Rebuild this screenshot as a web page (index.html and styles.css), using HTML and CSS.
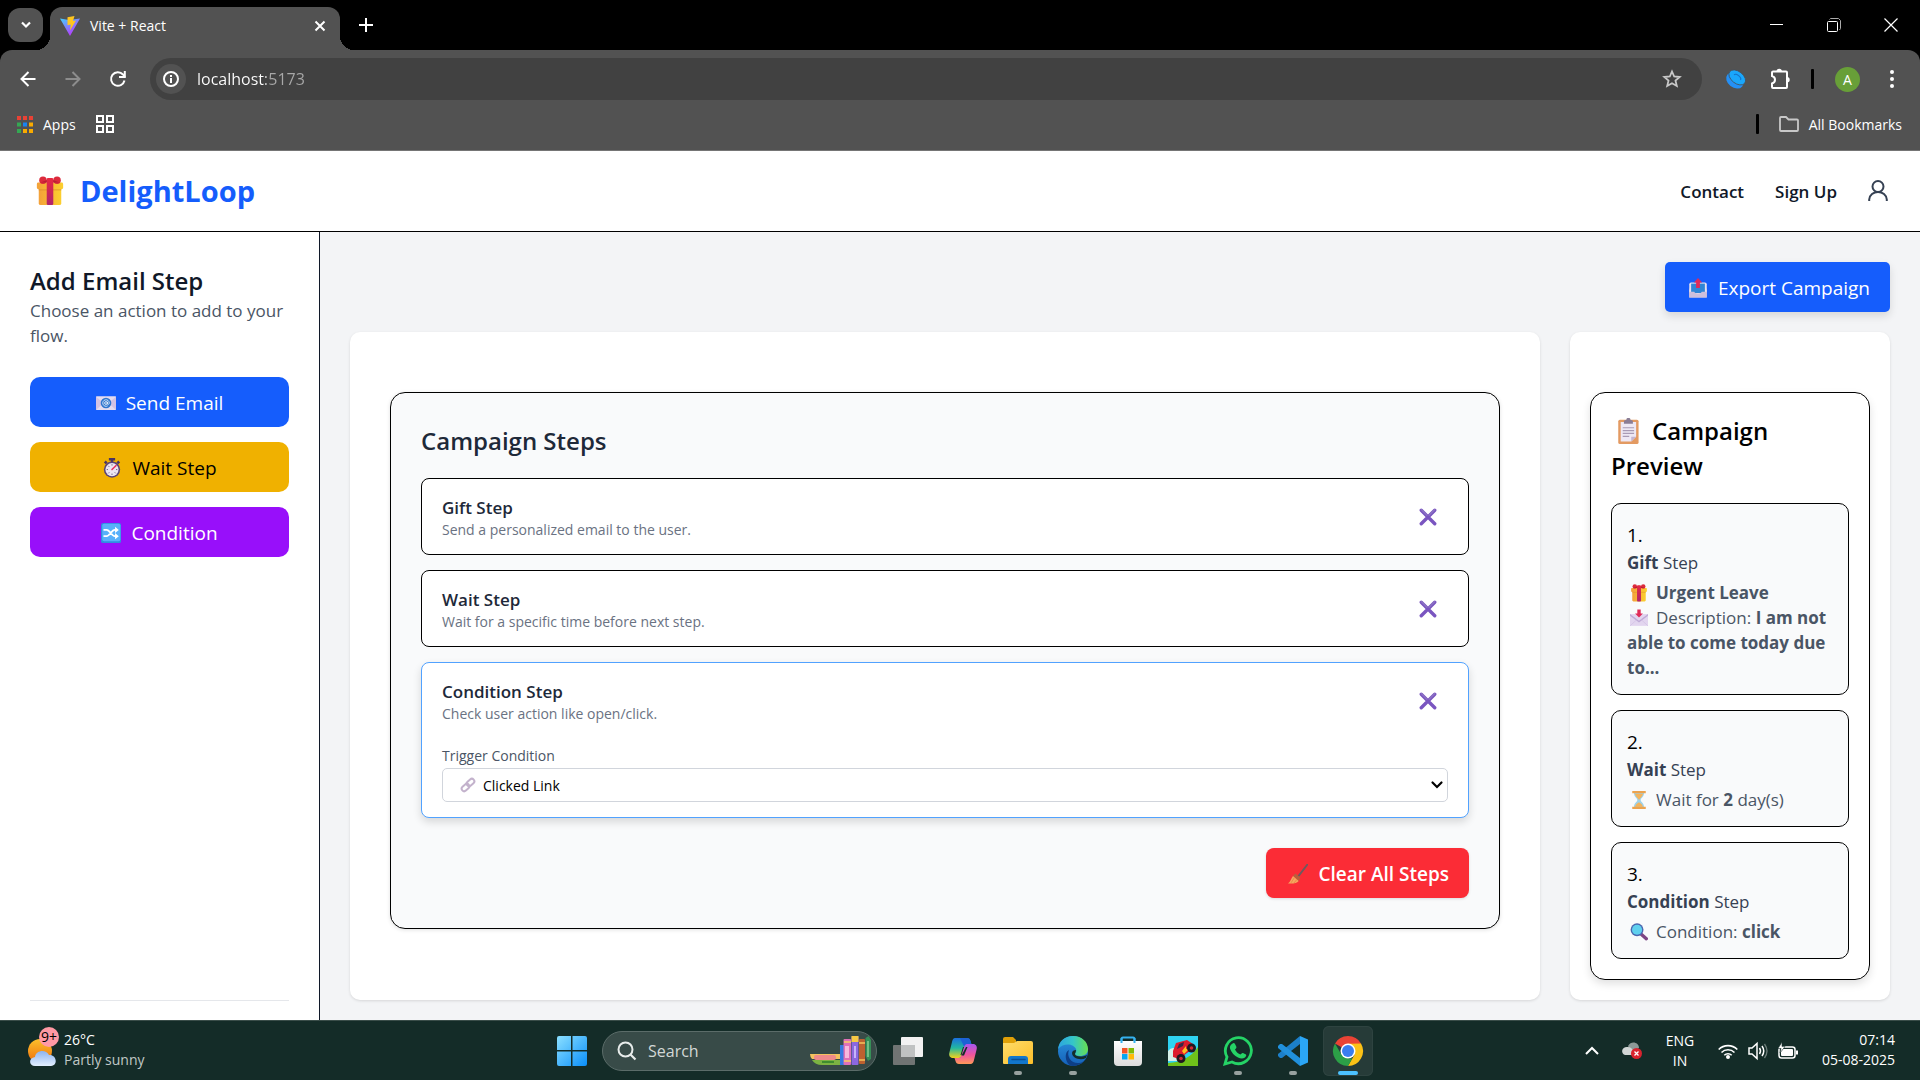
FILE: index.html
```
<!DOCTYPE html>
<html lang="en">
<head>
<meta charset="utf-8">
<title>Vite + React</title>
<link rel="stylesheet" href="styles.css">
</head>
<body>
<svg class="defs" aria-hidden="true">
  <defs>
    <linearGradient id="gold" x1="0" x2="1"><stop offset="0" stop-color="#f3a13a"/><stop offset="1" stop-color="#fccf2e"/></linearGradient>
    <linearGradient id="ribbon" x1="0" y1="0" x2="0" y2="1"><stop offset="0" stop-color="#e8293f"/><stop offset="1" stop-color="#b0246c"/></linearGradient>
    <linearGradient id="viteA" x1="0" y1="0" x2=".6" y2="1"><stop offset="0" stop-color="#41d1ff"/><stop offset="1" stop-color="#bd34fe"/></linearGradient>
    <linearGradient id="win" x1="0" y1="0" x2="1" y2="1"><stop offset="0" stop-color="#8ce0ff"/><stop offset="1" stop-color="#0a8ffa"/></linearGradient>
    <linearGradient id="edgeA" x1="0" y1="0" x2="1" y2="0"><stop offset="0" stop-color="#2ca4e0"/><stop offset=".5" stop-color="#35c6c8"/><stop offset="1" stop-color="#67e050"/></linearGradient>
    <linearGradient id="edgeB" x1="0" y1="0" x2="0" y2="1"><stop offset="0" stop-color="#2b95df"/><stop offset="1" stop-color="#1560b8"/></linearGradient>
    <linearGradient id="copA" x1="0" y1="0" x2="0" y2="1"><stop offset="0" stop-color="#1b6fe0"/><stop offset=".5" stop-color="#22b8a0"/><stop offset="1" stop-color="#f2d21c"/></linearGradient>
    <linearGradient id="copB" x1="0" y1="0" x2="0" y2="1"><stop offset="0" stop-color="#a657f0"/><stop offset=".55" stop-color="#f0559c"/><stop offset="1" stop-color="#ff9a58"/></linearGradient>
    <linearGradient id="folder" x1="0" y1="0" x2="1" y2="1"><stop offset="0" stop-color="#ffdc6b"/><stop offset="1" stop-color="#fcbf2a"/></linearGradient>
    <linearGradient id="sun" x1="0" y1="0" x2="0" y2="1"><stop offset="0" stop-color="#fcc02c"/><stop offset="1" stop-color="#ee6f0c"/></linearGradient>
    <linearGradient id="cloud" x1="0" y1="0" x2="0" y2="1"><stop offset="0" stop-color="#8db4ef"/><stop offset="1" stop-color="#e3efff"/></linearGradient>
    <linearGradient id="bag" x1="0" y1="0" x2="0" y2="1"><stop offset="0" stop-color="#fff"/><stop offset="1" stop-color="#dcdcdc"/></linearGradient>
  </defs>
  <symbol id="gift" viewBox="0 0 32 32">
    <rect x="4" y="11" width="24" height="20" rx="2" fill="url(#gold)"/>
    <rect x="2" y="7" width="28" height="7" rx="1.500" fill="url(#gold)"/><path d="M4 14h24v1.500H4z" fill="#d98a2a" opacity=".5"/>
    <circle cx="8.500" cy="4.500" r="4" fill="#dc2a3c"/><circle cx="23.500" cy="4.500" r="4" fill="#dc2a3c"/><path d="M6 7l10-4 10 4z" fill="#b81f33"/>
    <rect x="12.500" y="2" width="7" height="29" rx="1.500" fill="url(#ribbon)"/>
  </symbol>
  <symbol id="emailsym" viewBox="0 0 32 32">
    <rect y="5" width="32" height="22" rx="1" fill="#e4dcf0"/><path d="M0 6l12 10L0 27zM32 6L20 16l12 11z" fill="#d2c2e4"/>
    <circle cx="16" cy="16" r="8.500" fill="#2f76cf"/><circle cx="16" cy="16" r="2.200" fill="none" stroke="#fff" stroke-width="1.300"/><path d="M18.200 14v3c0 2 3 1.500 3-1a5.200 5.200 0 1 0-2.500 4.500" fill="none" stroke="#fff" stroke-width="1.200"/>
  </symbol>
  <symbol id="stopwatch" viewBox="0 0 32 32">
    <path d="M11 0h10v4h-3v3h-4V4h-3zM3 7l3-3 3 3-3 3zM29 7l-3-3-3 3 3 3z" fill="#4a3563"/>
    <circle cx="16" cy="18.500" r="13" fill="#5a4475"/><circle cx="16" cy="18.500" r="10.500" fill="#ece6f2"/>
    <path d="M16 10v2M16 25v2M7.500 18.500h2M22.500 18.500h2M10 12.500l1.500 1.500M10 24.500l1.500-1.500M22 24.500L20.500 23" stroke="#67577d" stroke-width="1.500"/>
    <path d="M16 18.500L22.500 12" stroke="#e8305c" stroke-width="2.500" stroke-linecap="round"/>
  </symbol>
  <symbol id="shuffle" viewBox="0 0 32 32">
    <rect width="32" height="32" rx="3" fill="#2f8de0"/><rect x="2" y="1" width="29" height="28" rx="3" fill="#58b0fa"/>
    <path d="M4 11h5c5 0 8 10 13 10h3M4 21h5c5 0 8-10 13-10h3" fill="none" stroke="#fff" stroke-width="3"/><path d="M22.500 6l6 5-6 5zM22.500 16l6 5-6 5z" fill="#fff"/>
  </symbol>
  <symbol id="outbox" viewBox="0 0 32 32">
    <path d="M5 8h22l3 12v11H2V20z" fill="#dccfe6"/><rect x="2" y="7" width="28" height="18" rx="3" fill="#e7e0f0"/><rect x="5" y="9" width="22" height="15" fill="#2f86d6"/><path d="M2 22h8c1 4 11 4 12 0h8v9H2z" fill="#cdbfdc"/><path d="M16 0l6.500 7H19v9h-6V7H9.500z" fill="#e02a58"/>
  </symbol>
  <symbol id="clipboard" viewBox="0 0 32 32">
    <rect x="4" y="2" width="25" height="30" rx="2" fill="#e39a62"/><path d="M7 5h19v18l-6 6H7z" fill="#eee8f4"/><path d="M26 23l-6 6v-6z" fill="#c4b4d2"/>
    <path d="M11 7V3.500L14 2c0-3 5-3 5 0l3 1.500V7z" fill="#8b7d95"/><path d="M9.500 12h14M9.500 15.500h14M9.500 19h14M9.500 22.500h8" stroke="#a99bb5" stroke-width="1.500"/>
  </symbol>
  <symbol id="inbox" viewBox="0 0 32 32">
    <path d="M0 9h32v21H0z" fill="#e2d5ef"/><path d="M0 9l16 12L32 9v3L16 24 0 12z" fill="#bfaad6"/><path d="M0 30l12-11M32 30L20 19" stroke="#cdbce0" stroke-width="1"/><path d="M13 1h6v7h4l-7 7-7-7h4z" fill="#e02a58"/>
  </symbol>
  <symbol id="hourglass" viewBox="0 0 32 32">
    <path d="M7 3h18c0 8-6 9-6 13s6 5 6 13H7c0-8 6-9 6-13S7 11 7 3z" fill="#9ed2ea"/><path d="M9 5h14c-1 6-5 7-6 10h-2c-1-3-5-4-6-10zM9 28c1-5 5-6 7-8 2 2 6 3 7 8z" fill="#f4b45c"/><path d="M4 0h24v4H4zM4 28h24v4H4z" fill="#eca34e"/>
  </symbol>
  <symbol id="magnifier" viewBox="0 0 32 32">
    <path d="M20 20l9 8" stroke="#7d4684" stroke-width="6" stroke-linecap="round"/><circle cx="12.500" cy="12" r="11.500" fill="#4a67b0"/><circle cx="12.500" cy="12" r="9" fill="#5fd0ee"/>
  </symbol>
  <symbol id="chain" viewBox="0 0 32 32">
    <g fill="none" stroke="#c3b2cc" stroke-width="4"><rect x="-8.500" y="-5" width="17" height="10" rx="5" transform="translate(21 11) rotate(-42)"/><rect x="-8.500" y="-5" width="17" height="10" rx="5" transform="translate(11 21) rotate(-42)"/></g>
  </symbol>
  <symbol id="broom" viewBox="0 0 32 32">
    <path d="M31 1L17 19" stroke="#6d5a5e" stroke-width="3" stroke-linecap="round"/><path d="M12 15l8 7-3 5-9-8z" fill="#b9603c"/><path d="M8 19l9 8c-3 4-10 5-17 4 4-3 5-8 8-12z" fill="#f7a560"/><path d="M10 22l-5 8M14 25l-5 6" stroke="#df7d3c" stroke-width="1"/>
  </symbol>
  <symbol id="cross" viewBox="0 0 16 16">
    <path d="M2 2l12 12M14 2L2 14" stroke="#7a55c0" stroke-width="3" stroke-linecap="round"/><path d="M2 1.500l5 5M14 1.500l-5 5" stroke="#8f78c4" stroke-width="1" stroke-linecap="round"/>
  </symbol>
</svg>

<section class="browser" aria-label="Browser">
  <div class="tabstrip">
    <button class="tab-search" aria-label="Search tabs"><svg width="12" height="8" viewBox="0 0 12 8"><path d="M2 1.500l4 4 4-4" fill="none" stroke="#fff" stroke-width="2.200"/></svg></button>
    <div class="tab">
      <svg width="20" height="20" viewBox="0 0 20 20"><path d="M0 2.500L9 4l11-1.500L10 20z" fill="url(#viteA)"/><path d="M7.500 1.200L14.500 0 13 5l3-.5-6 10 .8-6-3.300.7z" fill="#ffc61f"/></svg>
      <span class="tab-title">Vite + React</span>
      <button class="plain" aria-label="Close tab"><svg width="12" height="12" viewBox="0 0 12 12"><path d="M1.500 1.500l9 9M10.500 1.500l-9 9" stroke="#fff" stroke-width="2"/></svg></button>
    </div>
    <button class="plain new-tab" aria-label="New tab"><svg width="14" height="14" viewBox="0 0 14 14"><path d="M7 0v14M0 7h14" stroke="#fff" stroke-width="2"/></svg></button>
    <div class="window-buttons">
      <button class="plain" aria-label="Minimize"><svg width="14" height="14" viewBox="0 0 14 14"><path d="M0 6.500h13" stroke="#fff"/></svg></button>
      <button class="plain" aria-label="Restore"><svg width="14" height="14" viewBox="0 0 14 14"><rect x=".5" y="3.500" width="10" height="10" rx="1" fill="none" stroke="#fff"/><path d="M2.500 1.500l1-1h8l2 2v8l-1 1.500" fill="none" stroke="#aaa"/></svg></button>
      <button class="plain" aria-label="Close"><svg width="14" height="14" viewBox="0 0 14 14"><path d="M.5.5l13 13M13.500.5l-13 13" stroke="#fff" stroke-width="1.200"/></svg></button>
    </div>
  </div>
  <div class="chrome-bars">
    <div class="toolbar">
      <div class="nav-buttons">
        <button class="plain" aria-label="Back"><svg width="16" height="16" viewBox="0 0 16 16"><path d="M15.500 8H2M8.500 1L1.500 8l7 7" fill="none" stroke="#fff" stroke-width="2"/></svg></button>
        <button class="plain" aria-label="Forward"><svg width="16" height="16" viewBox="0 0 16 16"><path d="M.5 8H14M7.500 1l7 7-7 7" fill="none" stroke="#8d8d8d" stroke-width="2"/></svg></button>
        <button class="plain" aria-label="Reload"><svg width="16" height="16" viewBox="0 0 16 16"><path d="M14.500 9.500A6.800 6.800 0 1 1 13 3.500L15 6" fill="none" stroke="#fff" stroke-width="2"/><path d="M15.800 0v7H9V5h4.800V0z" fill="#fff"/></svg></button>
      </div>
      <div class="omnibox">
        <button class="site-info" aria-label="Site information"><svg width="16" height="16" viewBox="0 0 16 16"><circle cx="8" cy="8" r="7" fill="none" stroke="#fff" stroke-width="2"/><path d="M8 7v5M8 4v2" stroke="#fff" stroke-width="2"/></svg></button>
        <input class="address" type="text" value="localhost:5173" aria-label="Address">
        <button class="plain" aria-label="Bookmark this page"><svg width="20" height="20" viewBox="0 0 20 20"><path d="M10 2.500l2.200 5 5.500.5-4.200 3.600 1.300 5.400L10 14.200 5.200 17l1.300-5.400L2.300 8l5.500-.5z" fill="none" stroke="#c8c8c8" stroke-width="1.800"/></svg></button>
      </div>
      <div class="extensions">
        <button class="plain" aria-label="Extension"><svg width="20" height="20" viewBox="0 0 20 20"><g transform="rotate(38 10 10)"><ellipse cx="10" cy="12" rx="9.500" ry="7" fill="#2590f5"/><ellipse cx="10" cy="8" rx="9.500" ry="6" fill="#1aa7fb" stroke="#46505c" stroke-width=".8"/><path d="M6 8c0-3 8-3 8 0" fill="none" stroke="#1673c8" stroke-width="1.200"/></g></svg></button>
        <button class="plain" aria-label="Extensions"><svg width="20" height="22" viewBox="0 0 20 22"><path d="M2 4.500c0-.8.500-1 1-1h13c.8 0 1 .5 1 1v14.500c0 .7-.4 1-1 1H3c-.7 0-1-.4-1-1v-3.500c4-1 4-6.500 0-7.500z" fill="none" stroke="#fff" stroke-width="2"/><path d="M6.500 3.500a2.700 2.700 0 0 1 5.400 0zM17 9a2.700 2.700 0 0 1 0 5.400z" fill="#fff"/></svg></button>
        <span class="bar"></span>
        <button class="avatar" aria-label="Profile">A</button>
        <button class="plain" aria-label="Menu"><svg width="4" height="18" viewBox="0 0 4 18"><g fill="#fff"><circle cx="2" cy="2" r="2"/><circle cx="2" cy="9" r="2"/><circle cx="2" cy="16" r="2"/></g></svg></button>
      </div>
    </div>
    <div class="bookmarks">
      <button class="bookmark"><svg width="16" height="17" viewBox="0 0 16 17"><g fill="#e94235"><path d="M0 0h4v4H0zM6 0h4v4H6zM12 0h4v4h-4z"/></g><path d="M0 6.500h4v4H0zM0 13h4v4H0z" fill="#34a853"/><path d="M6 6.500h4v4H6z" fill="#1a84f0"/><path d="M12 6.500h4v4h-4zM6 13h4v4H6zM12 13h4v4h-4z" fill="#f9ab00"/></svg>Apps</button>
      <button class="plain" aria-label="Tab groups"><svg width="18" height="18" viewBox="0 0 18 18"><path d="M1 1h6v6H1zM11 1h6v6h-6zM1 11h6v6H1zM11 11h6v6h-6z" fill="none" stroke="#fff" stroke-width="2"/></svg></button>
      <span class="bar push"></span>
      <button class="bookmark"><svg width="20" height="16" viewBox="0 0 20 16"><path d="M1 14V2c0-.7.300-1 1-1h5l2.500 2.500H18c.7 0 1 .3 1 1V14c0 .7-.3 1-1 1H2c-.7 0-1-.3-1-1z" fill="none" stroke="#c8c8c8" stroke-width="1.800"/></svg>All Bookmarks</button>
    </div>
  </div>
</section>

<div class="app">
  <header class="site-header">
    <h1 class="brand"><svg width="32" height="30"><use href="#gift"/></svg>DelightLoop</h1>
    <nav class="site-nav">
      <a href="#contact">Contact</a>
      <a href="#signup">Sign Up</a>
      <a href="#account" aria-label="Account"><svg width="20" height="22" viewBox="0 0 20 22"><circle cx="10" cy="6.500" r="5.500" fill="none" stroke="#364153" stroke-width="2"/><path d="M1.200 21v-1.500C1.500 15 5.500 12 10 12s8.500 3 8.800 7.500V21" fill="none" stroke="#364153" stroke-width="2"/></svg></a>
    </nav>
  </header>
  <div class="body">
    <aside class="sidebar">
      <div>
        <h2 class="title title-dark">Add Email Step</h2>
        <p class="hint">Choose an action to add to your flow.</p>
      </div>
      <div class="actions">
        <button class="btn blue"><svg width="20" height="20"><use href="#emailsym"/></svg>Send Email</button>
        <button class="btn amber"><svg width="20" height="20"><use href="#stopwatch"/></svg>Wait Step</button>
        <button class="btn purple"><svg width="20" height="20"><use href="#shuffle"/></svg>Condition</button>
      </div>
      <hr class="rule">
    </aside>
    <main class="main">
      <button class="btn blue export"><svg width="20" height="20"><use href="#outbox"/></svg>Export Campaign</button>
      <div class="columns">
        <section class="sheet sheet-steps">
          <div class="panel panel-steps">
            <h2 class="title">Campaign Steps</h2>
            <ul class="steps">
              <li class="step">
                <div class="step-head"><div><h3>Gift Step</h3><p>Send a personalized email to the user.</p></div><button class="remove" aria-label="Remove Gift Step"><svg width="18" height="18"><use href="#cross"/></svg></button></div>
              </li>
              <li class="step">
                <div class="step-head"><div><h3>Wait Step</h3><p>Wait for a specific time before next step.</p></div><button class="remove" aria-label="Remove Wait Step"><svg width="18" height="18"><use href="#cross"/></svg></button></div>
              </li>
              <li class="step selected">
                <div class="step-head"><div><h3>Condition Step</h3><p>Check user action like open/click.</p></div><button class="remove" aria-label="Remove Condition Step"><svg width="18" height="18"><use href="#cross"/></svg></button></div>
                <label class="field-label" for="trigger">Trigger Condition</label>
                <div class="select">
                  <select id="trigger"><option>Clicked Link</option></select>
                  <svg class="select-icon" width="16" height="16"><use href="#chain"/></svg>
                  <svg class="select-arrow" width="12" height="8" viewBox="0 0 12 8"><path d="M1.500 1.500L6 6l4.500-4.500" fill="none" stroke="#000" stroke-width="2.200" stroke-linecap="round"/></svg>
                </div>
              </li>
            </ul>
            <button class="btn red clear"><svg width="20" height="20"><use href="#broom"/></svg>Clear All Steps</button>
          </div>
        </section>
        <section class="sheet sheet-preview">
          <div class="panel panel-preview">
            <h2 class="title title-black"><svg class="emoji-lg" width="26" height="26"><use href="#clipboard"/></svg>Campaign Preview</h2>
            <ol class="cards">
              <li class="card"><span class="num">1.</span><p class="kind"><b>Gift</b> Step</p>
                <div class="detail"><p><svg class="emoji" width="18" height="18"><use href="#gift"/></svg><b>Urgent Leave</b></p><p><svg class="emoji" width="18" height="18"><use href="#inbox"/></svg>Description: <b>I am not able to come today due to...</b></p></div></li>
              <li class="card"><span class="num">2.</span><p class="kind"><b>Wait</b> Step</p>
                <div class="detail"><p><svg class="emoji" width="18" height="18"><use href="#hourglass"/></svg>Wait for <b>2</b> day(s)</p></div></li>
              <li class="card"><span class="num">3.</span><p class="kind"><b>Condition</b> Step</p>
                <div class="detail"><p><svg class="emoji" width="18" height="18"><use href="#magnifier"/></svg>Condition: <b>click</b></p></div></li>
            </ol>
          </div>
        </section>
      </div>
    </main>
  </div>
</div>

<footer class="taskbar">
  <button class="weather">
    <span class="weather-icon"><svg width="32" height="38" viewBox="0 0 32 38"><circle cx="12" cy="22" r="12" fill="url(#sun)"/><path d="M7 37c-6 0-7-8 0-9 1-7 11-8 14-2 7-1 10 10 2 11z" fill="url(#cloud)"/></svg><span class="badge">9+</span></span>
    <span class="weather-text"><span>26°C</span><span class="dim">Partly sunny</span></span>
  </button>
  <div class="dock">
    <button class="tile" aria-label="Start"><svg width="30" height="30" viewBox="0 0 30 30"><path d="M0 2Q0 0 2 0h12v14H0zM15.500 0H28q2 0 2 2v12H15.500zM0 15.500h14V30H2q-2 0-2-2zM15.500 15.500H30V28q0 2-2 2H15.500z" fill="url(#win)"/></svg></button>
    <label class="search">
      <svg width="20" height="20" viewBox="0 0 20 20"><circle cx="8.500" cy="8.500" r="7" fill="none" stroke="#e8eceb" stroke-width="2"/><path d="M13.500 13.500l5 5" stroke="#e8eceb" stroke-width="2.200"/></svg>
      <input type="search" placeholder="Search" aria-label="Search">
      <svg width="62" height="30" viewBox="0 0 62 30"><path d="M0 18h30v5H2q-2-2-2-5z" fill="#f5c25e"/><rect x="4" y="19" width="22" height="5" rx="2" fill="#f08a8a"/><path d="M2 24h28v5H12Q5 29 2 24z" fill="#7cb342"/><path d="M12 26h12" stroke="#3f8d2f" stroke-width="2"/><path d="M30 9h4v20h-4z" fill="#3878e0"/><rect x="33.500" y="3" width="7.500" height="26" rx="1" fill="#e070b8"/><path d="M35 10h4v12h-4z" fill="#f8b8dc"/><path d="M34 6h7M34 25h7" stroke="#f8d060" stroke-width="1.500"/><rect x="41.500" width="7" height="29" rx="1" fill="#8c68e0"/><path d="M41.500 0h7v6h-7z" fill="#f6c944"/><path d="M44 10h2v12h-2z" fill="#c6b4fa"/><rect x="49" y="3" width="6" height="25" rx="1" fill="#bd6130"/><path d="M49 7h6M49 24h6" stroke="#f3c35b" stroke-width="1.500"/><path d="M55.500 2l3-2 2.500 4v19l-3 2-2.500-5z" fill="#368f57"/><path d="M58 5v16" stroke="#89cc94" stroke-width="1.500"/></svg>
    </label>
    <button class="tile" aria-label="Task view"><svg width="30" height="28" viewBox="0 0 30 28"><rect y="8" width="22" height="20" rx="1" fill="#707473"/><rect x="8" width="22" height="20" rx="1" fill="#f2f2f2"/><path d="M8 8h14v12H8z" fill="#c0c2c2"/></svg></button>
    <button class="tile" aria-label="Copilot"><svg width="28" height="26" viewBox="0 0 28 26"><path d="M6 0h12c2 0 3 1 3.500 3l1 3.500h-3.500c-2 0-3 1-3.500 3L13 17c-1 2.500-2 3-4 3H4c-3 0-4.500-2.500-3.600-5.500L3 4c.6-2.500 1.500-4 3-4z" fill="url(#copA)"/><path d="M11 0h7c2 0 3 1 3.500 3l1 3.500h-3.500c-2 0-3 1-3.500 3z" fill="#1c62d4"/><path d="M22 6h2c3 0 4.500 2.500 3.600 5.500L25 22c-.6 2.500-1.500 4-3.500 4H10c-2 0-3-1-3.500-3l-1-3H9c2 0 3-1 3.500-3L15 9c1-2.500 2-3 4-3z" fill="url(#copB)"/><path d="M15 9l-2.500 8h-1L14 9z" fill="#142c28"/><path d="M17 9h1.500l-3.500 8.500h-2.500z" fill="#142c28"/></svg></button>
    <button class="tile running" aria-label="File Explorer"><svg width="30" height="28" viewBox="0 0 30 28"><path d="M0 2q0-2 2-2h8l3 3v5H0z" fill="#e0a008"/><path d="M0 6h11l3-2h14q2 0 2 2v20q0 1-1 1H1q-1 0-1-1z" fill="url(#folder)"/><path d="M5 27v-5q0-3 3-3h14q3 0 3 3v5z" fill="#1277cc"/><path d="M9 22.500h13" stroke="#0b4f94" stroke-width="1.500" stroke-linecap="round"/></svg></button>
    <button class="tile running" aria-label="Edge"><svg width="30" height="30" viewBox="0 0 30 30"><circle cx="15" cy="15" r="15" fill="url(#edgeB)"/><path d="M0 13C1 5 7 0 15 0c9 0 15 6 15 13 0 5-4 7-8 7-3 0-5-1-5-2 0-1 2-2 1-5C16 8 6 6 0 13z" fill="url(#edgeA)"/><path d="M11 14c-3 7 3 14 10 13 3 0 5-2 7-4-3 4-8 7-13 7C8 30 5 17 11 14z" fill="#0e3e86"/><path d="M17 18c0 2 5 4 12 1l-1 3c-6 3-14 0-14-5 0-2 2-3 4-3 0 2-1 3-1 4z" fill="#142e2a"/></svg></button>
    <button class="tile" aria-label="Microsoft Store"><svg width="30" height="30" viewBox="0 0 30 30"><path d="M8.500 7V3q0-1.500 1.500-1.500h10q1.500 0 1.500 1.500v4" fill="none" stroke="#35b2ef" stroke-width="2"/><path d="M1 5h28v21q0 4-4 4H5q-4 0-4-4z" fill="url(#bag)"/><path d="M8.500 2v5M21.500 2v5" stroke="#35b2ef" stroke-width="2"/><path d="M9 12h5.500v5.500H9z" fill="#f35325"/><path d="M15.500 12H21v5.500h-5.500z" fill="#81bc06"/><path d="M9 18h5.500v5.500H9z" fill="#05a6f0"/><path d="M15.500 18H21v5.500h-5.500z" fill="#ffba08"/></svg></button>
    <button class="tile" aria-label="Racing game"><svg width="30" height="30" viewBox="0 0 30 30"><path d="M0 0h30v30H0z" fill="#2fd3f2"/><path d="M0 15q4-5 8-2t7 0v12H0z" fill="#d6f1e8"/><path d="M0 27Q20 26 30 11v19H0z" fill="#6fc21a"/><path d="M5 15l3-8 11-3 6 4-2 6-12 9-6-2z" fill="#dc1c2c"/><path d="M9 13l2-5 5-2-1 4z" fill="#372746"/><path d="M14 15l4-5v3l4-1-6 6z" fill="#ffbf20"/><circle cx="23.500" cy="12" r="4.500" fill="#201820"/><circle cx="23.500" cy="12" r="1.800" fill="#d52b35"/><circle cx="13" cy="22.500" r="4.500" fill="#201820"/><circle cx="13" cy="22.500" r="1.800" fill="#d52b35"/></svg></button>
    <button class="tile running" aria-label="WhatsApp"><svg width="30" height="30" viewBox="0 0 30 30"><path d="M2 28l2-7A13 13 0 1 1 9 26z" fill="none" stroke="#25d366" stroke-width="2.800"/><path d="M9 8q2-2 3 0l1.500 3q0 1-1.500 2.500 2 4 5.500 5 1.500-2 2.500-1.500l3 1.500q1 1-1 3-3 2-7 0-6-3-8-9-.5-3 2-4.500z" fill="#25d366"/></svg></button>
    <button class="tile running" aria-label="Visual Studio Code"><svg width="30" height="30" viewBox="0 0 30 30"><path d="M22 0l8 3.500v23L22 30z" fill="#2ba6f5"/><path d="M22 0v8L4 22H2l-2-2v-2z" fill="#1c7fc9"/><path d="M22 30v-8L4 8H2l-2 2v2z" fill="#2190dc"/></svg></button>
    <button class="tile running active" aria-label="Chrome"><svg width="30" height="30" viewBox="0 0 30 30"><path d="M15 15L2 7.500a15 15 0 0 1 26 0z" fill="#ea4335"/><path d="M15 7.500h13A15 15 0 0 1 15 30l6.500-11.200z" fill="#fbc116"/><path d="M2 7.500L8.500 18.800 15 22.500h4.300L15 30A15 15 0 0 1 2 7.500z" fill="#2c9f47"/><path d="M2 7.500h26L15 8z" fill="#ea4335"/><circle cx="15" cy="15" r="7.500" fill="#fff"/><circle cx="15" cy="15" r="6" fill="#3a7df0"/></svg></button>
  </div>
  <div class="tray">
    <button class="plain" aria-label="Show hidden icons"><svg width="14" height="9" viewBox="0 0 14 9"><path d="M1 8l6-6 6 6" fill="none" stroke="#fff" stroke-width="2"/></svg></button>
    <button class="plain" aria-label="OneDrive"><svg width="20" height="18" viewBox="0 0 20 18"><path d="M6 4c3-6 11-4 11 2l-8 4z" fill="#8d9997"/><path d="M3 13c-5-2-3-9 3-8 3 0 6 3 8 8z" fill="#d2d6d5"/><circle cx="14.500" cy="11.500" r="5.500" fill="#d9232e"/><path d="M12.500 9.500l4 4M16.500 9.500l-4 4" stroke="#fff" stroke-width="1.300"/></svg></button>
    <button class="plain lang"><span>ENG</span><span>IN</span></button>
    <div class="status">
      <svg width="20" height="16" viewBox="0 0 20 16"><g fill="none" stroke="#fff" stroke-width="1.600"><path d="M.7 6.500a13 13 0 0 1 18.600 0M3.500 9.500a9.200 9.200 0 0 1 13 0M6.300 12.200a5.300 5.300 0 0 1 7.400 0"/></g><circle cx="10" cy="14" r="2" fill="#fff"/></svg>
      <svg width="20" height="18" viewBox="0 0 20 18"><path d="M1 6h3l5-4.500v15L4 12H1z" fill="none" stroke="#fff" stroke-width="1.500"/><path d="M11.500 6q2 3 0 6M14 4q3.500 5 0 10" fill="none" stroke="#fff" stroke-width="1.500"/><path d="M16.500 2q5 7 0 14" fill="none" stroke="#6c7c79" stroke-width="1.300"/></svg>
      <svg width="20" height="18" viewBox="0 0 20 18"><rect x="1" y="5" width="16" height="11" rx="2.500" fill="none" stroke="#fff" stroke-width="1.500"/><rect x="3" y="7" width="12" height="7" rx="1" fill="#fff"/><path d="M18 8.500h2v4h-2z" fill="#fff"/><path d="M4 0L0 6.500h3L2 11l5-6.500H4z" fill="#fff" stroke="#142c28" stroke-width=".6"/></svg>
    </div>
    <div class="clock"><time>07:14</time><span>05-08-2025</span></div>
  </div>
</footer>
</body>
</html>
```
FILE: styles.css
```
* { box-sizing: border-box; }

body, h1, h2, h3, p, ul, ol, hr { margin: 0; padding: 0; }

body {
  min-height: 100vh;
  display: flex;
  flex-direction: column;
  font-family: "Open Sans", "Noto Sans", sans-serif;
  font-size: 17px;
  line-height: 25px;
  color: #000;
  background: #fff;
}

ul, ol { list-style: none; }
button, input, select { font: inherit; color: inherit; margin: 0; }
button { border: 0; padding: 0; background: none; cursor: pointer; }
a { color: inherit; text-decoration: none; }
svg { display: block; flex: none; overflow: visible; }
.defs { position: absolute; width: 0; height: 0; }
.plain { display: flex; align-items: center; justify-content: center; }

/* Browser window */
.browser { background: #000; color: #fff; font-size: 14px; }
.tabstrip { display: flex; align-items: center; height: 50px; padding: 0 16px 0 8px; }
.tab-search {
  display: flex; align-items: center; justify-content: center;
  width: 35px; height: 34px; border-radius: 12px; background: #525252;
}
.tab {
  position: relative; align-self: flex-end;
  display: flex; align-items: center; gap: 10px;
  width: 290px; height: 43px; margin-left: 7px; padding: 0 14px 6px 10px;
  border-radius: 12px 12px 0 0; background: #525252;
}
.tab::before, .tab::after {
  content: ""; position: absolute; bottom: 0; width: 14px; height: 14px;
}
.tab::before { right: 100%; background: radial-gradient(circle at 0 0, transparent 14px, #525252 14px); }
.tab::after { left: 100%; background: radial-gradient(circle at 100% 0, transparent 14px, #525252 14px); }
.tab-title { flex: 1; }
.new-tab { margin-left: 19px; }
.window-buttons { display: flex; gap: 43px; margin-left: auto; padding-right: 6px; }
.chrome-bars { border-radius: 12px 12px 0 0; background: #525252; border-bottom: 1px solid #757575; }
.toolbar { display: flex; align-items: center; height: 58px; padding: 0 26px 0 20px; }
.nav-buttons { display: flex; gap: 29px; margin-right: 24px; }
.omnibox {
  flex: 1; display: flex; align-items: center;
  height: 42px; padding: 0 20px 0 6px; border-radius: 21px; background: #414141;
}
.site-info {
  display: flex; align-items: center; justify-content: center;
  width: 30px; height: 30px; border-radius: 15px; background: #525252;
}
.address {
  flex: 1; min-width: 0; padding: 0; margin-left: 11px; border: 0; outline: 0; font-size: 16px;
  background: linear-gradient(90deg, #fff 69px, #a8a8a8 69px);
  -webkit-background-clip: text; background-clip: text; -webkit-text-fill-color: transparent;
}
.extensions { display: flex; align-items: center; gap: 24px; margin-left: 24px; }
.bar { width: 3px; height: 20px; border-radius: 1px; background: #000; }
.avatar { width: 25px; height: 25px; margin-right: 6px; border-radius: 13px; background: #689f38; font-size: 14px; }
.extensions .bar { margin: 0 -3px; }
.bookmarks { display: flex; align-items: center; gap: 20px; height: 42px; padding: 0 18px 10px 17px; }
.bookmark { display: flex; align-items: center; gap: 10px; }
.push { margin-left: auto; }

/* Site header */
.app { flex: 1; display: flex; flex-direction: column; }
.site-header {
  display: flex; align-items: center; justify-content: space-between;
  height: 81px; padding: 0 32px 0 34px; border-bottom: 1px solid #000;
}
.brand { display: flex; align-items: center; gap: 14px; font-size: 29px; line-height: 40px; font-weight: 700; color: #155dfc; }
.site-nav { display: flex; align-items: center; gap: 31px; font-size: 17px; font-weight: 600; color: #101828; }

/* Page body */
.body { flex: 1; display: flex; }
.sidebar {
  flex: none; display: flex; flex-direction: column; gap: 29px;
  width: 320px; padding: 32px 30px 19px; border-right: 1px solid #101828;
}
.title { font-size: 24px; line-height: 35px; font-weight: 600; color: #1e2939; }
.title-dark { color: #101828; line-height: 34px; }
.title-black { color: #000; }
.hint { color: #4a5565; }
.actions { display: flex; flex-direction: column; gap: 15px; }
.rule { margin-top: auto; border: 0; border-top: 1px solid #e5e7eb; }
.btn {
  display: flex; align-items: center; justify-content: center; gap: 10px;
  height: 50px; padding: 2px 20px 0; border-radius: 10px; font-size: 19px; color: #fff;
}
.blue { background: #155dfc; }
.amber { background: #f0b100; color: #000; }
.purple { background: #980ffa; }
.red { background: #fb2c36; font-weight: 600; }

.main { flex: 1; min-width: 0; display: flex; flex-direction: column; gap: 20px; padding: 30px 30px 20px; background: #f3f4f6; }
.export { align-self: flex-end; padding-left: 23px; border-radius: 5px; box-shadow: 0 4px 8px rgba(0, 0, 0, .12); }
.columns { flex: 1; display: grid; grid-template-columns: minmax(0, 1fr) 320px; gap: 30px; }
.sheet { border-radius: 10px; background: #fff; box-shadow: 0 1px 3px rgba(0, 0, 0, .12); }
.sheet-steps { padding: 60px 40px 20px; }
.sheet-preview { padding: 60px 20px 20px; }
.panel { display: flex; flex-direction: column; gap: 20px; border: 1px solid #000; border-radius: 15px; }
.panel-steps { padding: 30px; background: #f9fafb; box-shadow: 0 1px 4px rgba(0, 0, 0, .12); }
.panel-preview { padding: 20px; box-shadow: 0 4px 8px rgba(0, 0, 0, .12); }

/* Steps */
.steps, .cards { display: flex; flex-direction: column; gap: 15px; }
.step { padding: 16px 20px 14px; border: 1px solid #000; border-radius: 8px; background: #fff; }
.selected { padding-bottom: 15px; border-color: #51a2ff; box-shadow: 0 4px 8px rgba(0, 0, 0, .14); }
.step-head { display: flex; align-items: center; justify-content: space-between; }
.step h3 { font-size: 17px; font-weight: 600; line-height: 25px; color: #1e2939; }
.step p { font-size: 14px; line-height: 20px; color: #6a7282; }
.remove { padding: 9px 11px 11px; }
.field-label { display: block; margin-top: 19px; font-size: 14px; color: #4a5565; }
.select { display: grid; align-items: center; }
.select > * { grid-area: 1 / 1; }
.select select {
  appearance: none; width: 100%; height: 34px; padding: 0 30px 0 40px;
  border: 1px solid #d1d5dc; border-radius: 5px; background: #fff; font-size: 14px;
}
.select-icon { margin-left: 18px; pointer-events: none; }
.select-arrow { justify-self: end; margin-right: 5px; pointer-events: none; }
.clear { align-self: flex-end; margin-top: 10px; border-radius: 8px; padding-left: 22px; box-shadow: 0 1px 3px rgba(0, 0, 0, .12); }

/* Preview */
.card { padding: 16px 15px 14px; border: 1px solid #000; border-radius: 10px; background: #f9fafb; }
.num { display: block; font-size: 19px; line-height: 30px; }
.kind { margin-bottom: 5px; color: #364153; }
.detail { color: #4a5565; }
.emoji, .emoji-lg { display: inline-block; }
.emoji { margin: 0 8px 0 3px; vertical-align: -3px; }
.emoji-lg { margin: 0 11px 0 4px; vertical-align: -4px; }

/* Taskbar */
.taskbar {
  display: grid; grid-template-columns: 1fr auto 1fr; align-items: center;
  height: 60px; border-top: 1px solid #3a4d49; background: #142c28;
  color: #fff; font-size: 14px; line-height: 20px;
}
.weather { display: flex; align-items: center; gap: 4px; padding-left: 28px; text-align: left; }
.weather-icon { position: relative; width: 32px; height: 38px; margin-bottom: 6px; }
.badge {
  position: absolute; top: -2px; left: 11px; width: 20px; height: 20px;
  border-radius: 10px; background: #ff99a4; color: #000; font-size: 14px; text-align: center;
}
.weather-text { display: flex; flex-direction: column; padding-bottom: 2px; }
.dim { color: #c0c8c6; }
.dock { display: flex; align-items: center; gap: 5px; }
.tile {
  position: relative; display: flex; align-items: center; justify-content: center;
  width: 50px; height: 50px; border-radius: 6px;
}
.running::after {
  content: ""; position: absolute; bottom: 1px; left: 50%; translate: -50% 0;
  width: 8px; height: 4px; border-radius: 2px; background: #97a19f;
}
.active { background: #263b38; box-shadow: inset 0 0 0 1px #2e4340; }
.active::after { width: 20px; background: #4cc2ff; }
.search {
  display: flex; align-items: center; gap: 11px; width: 275px; height: 40px; margin-right: 1px; padding: 0 4px 0 14px;
  border: 1px solid #5b6c69; border-radius: 20px; background: #384b48;
}
.search input { flex: 1; min-width: 0; border: 0; outline: 0; padding: 0; background: none; font-size: 16px; }
.search input::placeholder { color: #d2d8d6; opacity: 1; }
.tray { display: flex; align-items: center; justify-content: flex-end; gap: 23px; padding-right: 25px; }
.lang { flex-direction: column; width: 30px; }
.status { display: flex; align-items: center; gap: 10px; }
.clock { display: flex; flex-direction: column; align-items: flex-end; margin-left: -6px; width: 80px; padding-bottom: 2px; }
```
